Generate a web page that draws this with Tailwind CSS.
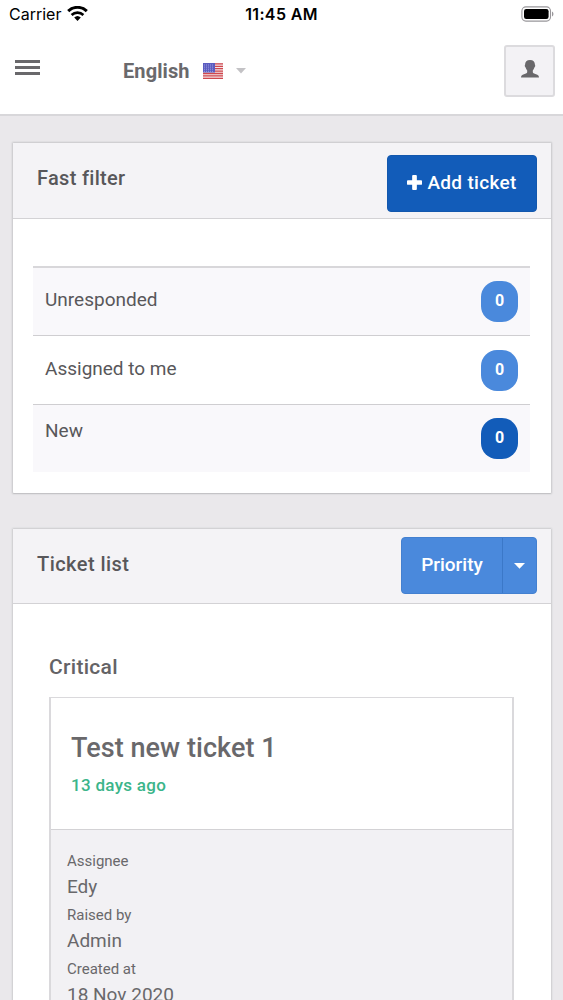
<!DOCTYPE html>
<html lang="en">
<head>
  <meta charset="UTF-8" />
  <meta name="viewport" content="width=device-width, initial-scale=1.0" />
  <title>Tickets</title>
  <script src="https://cdn.jsdelivr.net/npm/@tailwindcss/browser@4"></script>
</head>
<body class="h-[1000px] overflow-hidden bg-[#eae8eb] font-['Roboto',sans-serif] text-[#58575a]">

  <!-- Header -->
  <header class="h-[116px] bg-white border-b-2 border-[#d8d7da]">
    <div class="h-[29px] px-[9px] grid grid-cols-3 items-center font-['Inter',sans-serif] text-black">
      <div class="flex items-center gap-[6px]">
        <span class="text-[16px] leading-[29px]">Carrier</span>
        <svg class="-mt-[2px] w-[21px] h-[15px]" viewBox="0 0 21 15" fill="none" stroke="#000">
          <path d="M1.2 5.1a13.4 13.4 0 0 1 18.6 0" stroke-width="3" />
          <path d="M4.6 9a8.6 8.6 0 0 1 11.8 0" stroke-width="2.6" />
          <path d="M10.5 15l-3.3-3.5a4.8 4.8 0 0 1 6.6 0z" fill="#000" stroke="none" />
        </svg>
      </div>
      <div class="text-center text-[16px] leading-[29px] font-semibold tracking-[0.35px] whitespace-nowrap">11:45 AM</div>
      <svg class="justify-self-end -mt-[2px] w-[33px] h-[16px]" viewBox="0 0 33 16">
        <rect x="0.900" y="0.900" width="28.600" height="14.200" rx="4" fill="#fff" stroke="#98969a" stroke-width="1.1" />
        <rect x="3" y="3" width="24.600" height="10" rx="2.200" fill="#000" />
        <path d="M31 5.500c1.900.7 1.900 4.300 0 5z" fill="#98969a" />
      </svg>
    </div>
    <div class="flex items-start pl-[15px] pr-[8px] pt-4">
      <button class="mt-[15px] w-[25px] flex flex-col gap-[3px]">
        <span class="h-[3px] bg-[#69686b]"></span>
        <span class="h-[3px] bg-[#69686b]"></span>
        <span class="h-[3px] bg-[#69686b]"></span>
      </button>
      <div class="ml-[83px] mt-[12px] flex items-center">
        <span class="w-[66px] text-[20px] leading-7 font-bold tracking-[0.1px] text-[#6a696c]">English</span>
        <svg class="ml-[14px] w-[20px] h-[16px]" viewBox="0 0 20 16">
          <rect width="20" height="16" fill="#f3e3e5" />
          <path d="M0 .9h20M0 3.3h20M0 5.7h20M0 8.1h20M0 10.5h20M0 12.9h20M0 15.3h20" stroke="#d0474e" stroke-width="1.3" />
          <rect width="12" height="9.5" fill="#5b5cc0" />
          <path d="M1 2h10M1 4.1h10M1 6.2h10M1 8.3h10" stroke="#aeb0e6" stroke-width=".8" stroke-dasharray="1 1" />
        </svg>
        <svg class="ml-[13px] w-[10px] h-[6px]" viewBox="0 0 10 6"><path d="M0 0h10L5 5.5z" fill="#c3c2c5" /></svg>
      </div>
      <button class="ml-auto w-[51px] h-[52px] flex justify-center border-2 border-[#dcdbde] rounded-[3px] bg-[#f3f2f5]">
        <svg class="mt-[13px] w-[18px] h-[18px]" viewBox="0 0 18 18" fill="#69686b">
          <path d="M9 0c3.300 0 4.900 1.700 4.900 4.600 0 .5.400.6.300 1.400-.1.800-.5 1-.8 1.500-.3 1.200-.8 2.100-1.600 2.900v1.500c0 .7.600 1.200 1.300 1.500l3.200 1.300c1.100.5 1.600 1.300 1.700 2.800H0c.1-1.500.6-2.300 1.700-2.800l3.200-1.300c.7-.3 1.300-.8 1.300-1.500v-1.500c-.8-.8-1.300-1.700-1.600-2.900-.3-.5-.7-.7-.8-1.500-.1-.8.300-.9.300-1.400C4.100 1.700 5.700 0 9 0z" />
        </svg>
      </button>
    </div>
  </header>

  <!-- Fast filter -->
  <section class="mt-[26px] ml-3 w-[540px] h-[352px] bg-white border border-[#d0cfd2] border-b-[#c4c3c6] rounded-[2px] shadow-[0_0_1px_1px_#dfdee1]">
    <div class="h-[76px] flex justify-between pl-6 pr-[14px] pt-3 bg-[#f4f3f6] border-b border-[#d3d2d5]">
      <h2 class="mt-[9px] text-[20px] leading-7 font-medium tracking-[0.3px]">Fast filter</h2>
      <button class="w-[150px] h-[57px] pb-px flex items-center justify-center gap-[5px] rounded-[4px] border border-[#1257ad] bg-[#125cb9] text-white">
        <svg class="-mt-[2px] w-[15px] h-[15px]" viewBox="0 0 16 16" fill="#fff"><path d="M6.500 0h3a1 1 0 0 1 1 1v4.500H15a1 1 0 0 1 1 1v3a1 1 0 0 1-1 1h-4.500V15a1 1 0 0 1-1 1h-3a1 1 0 0 1-1-1v-4.500H1a1 1 0 0 1-1-1v-3a1 1 0 0 1 1-1h4.500V1a1 1 0 0 1 1-1z" /></svg>
        <span class="text-[19px] font-medium tracking-[0.3px]">Add ticket</span>
      </button>
    </div>
    <div class="mt-[47px] ml-5 w-[497px] text-[19px] leading-7">
      <div class="h-[69px] flex justify-between px-3 pt-[12px] border-t-2 border-[#d8d7da] bg-[#f9f8fb]">
        <span class="mt-[6px]">Unresponded</span>
        <span class="mt-[1px] w-[37px] h-[41px] pb-[2px] flex items-center justify-center rounded-[16px] bg-[#4a89dc] text-white text-[16px] font-bold">0</span>
      </div>
      <div class="h-[69px] flex justify-between px-3 pt-[13px] border-t border-[#cfced1]">
        <span class="mt-[6px]">Assigned to me</span>
        <span class="mt-[1px] w-[37px] h-[41px] pb-[2px] flex items-center justify-center rounded-[16px] bg-[#4a89dc] text-white text-[16px] font-bold">0</span>
      </div>
      <div class="h-[68px] flex justify-between px-3 pt-[12px] border-t border-[#cfced1] bg-[#f9f8fb]">
        <span>New</span>
        <span class="mt-[1px] w-[37px] h-[41px] pb-[2px] flex items-center justify-center rounded-[16px] bg-[#125cb9] text-white text-[16px] font-bold">0</span>
      </div>
    </div>
  </section>

  <!-- Ticket list -->
  <section class="mt-[34px] ml-3 w-[540px] h-[600px] bg-white border border-[#d3d2d5] rounded-[2px] shadow-[0_0_1px_1px_#e2e1e4]">
    <div class="h-[75px] flex justify-between pl-6 pr-[14px] pt-2 bg-[#f4f3f6] border-b border-[#d3d2d5]">
      <h2 class="mt-[13px] text-[20px] leading-7 font-medium tracking-[0.45px]">Ticket list</h2>
      <div class="w-[136px] h-[57px] flex rounded-[4px] border border-[#4380d0] bg-[#4a89dc] text-white">
        <button class="w-[101px] pb-px border-r border-[#3b78c8] text-[19px] font-medium">Priority</button>
        <button class="flex-1 flex items-center justify-center">
          <svg class="w-[11px] h-[6px]" viewBox="0 0 11 6"><path d="M0 0h11L5.500 5.700z" fill="#fff" /></svg>
        </button>
      </div>
    </div>
    <div class="pt-[49px] pl-[36px]">
      <h3 class="text-[21px] leading-7 font-medium tracking-[0.3px] text-[#646366]">Critical</h3>
      <article class="mt-4 w-[465px] h-[400px] border-2 border-t border-[#dad9dc] bg-[#f2f1f4] text-[#69686b]">
        <div class="h-[132px] pl-5 pt-[32px] bg-white border-b border-[#d3d2d5]">
          <h4 class="text-[27px] leading-9 font-medium tracking-[0.05px]">Test new ticket 1</h4>
          <p class="mt-[7px] text-[17px] leading-6 font-medium tracking-[0.3px] text-[#3bb58a]">13 days ago</p>
        </div>
        <dl class="pl-4 pt-[19px]">
          <dt class="text-[15px] leading-6">Assignee</dt>
          <dd class="h-[30px] text-[19px] leading-7">Edy</dd>
          <dt class="text-[15px] leading-6">Raised by</dt>
          <dd class="h-[30px] text-[19px] leading-7">Admin</dd>
          <dt class="text-[15px] leading-6">Created at</dt>
          <dd class="h-[30px] text-[19px] leading-7">18 Nov 2020</dd>
        </dl>
      </article>
    </div>
  </section>
</body>
</html>
